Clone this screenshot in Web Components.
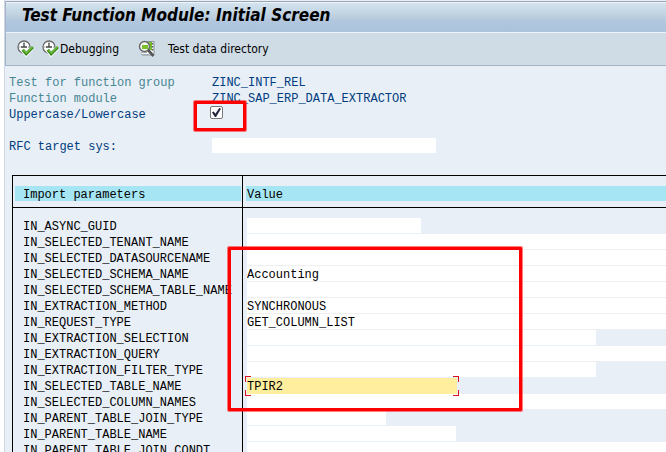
<!DOCTYPE html>
<html lang="en">
<head>
<meta charset="utf-8">
<title>Test Function Module: Initial Screen</title>
<style>
html, body { margin: 0; height: 100%; }
body { background: #fff; overflow: hidden; font: 12px/18px "Liberation Mono", monospace; color: #000; }
</style>
</head>
<body>
<sap-screen>
  <screen-title slot="title">Test Function Module: Initial Screen</screen-title>
  <app-toolbar slot="toolbar"></app-toolbar>
  <function-form></function-form>
  <param-table></param-table>
</sap-screen>

<script>
const define = (name, html, setup) => customElements.define(name, class extends HTMLElement {
  constructor() {
    super();
    const t = document.createElement('template');
    t.innerHTML = html;
    this.attachShadow({ mode: 'open' }).append(t.content.cloneNode(true));
    if (setup) setup(this.shadowRoot);
  }
});

define('mark-box', `<style>
  :host { position: absolute; box-sizing: border-box; border: 3px solid #f00; border-radius: 1px;
    box-shadow: 0 0 0 1px #ff000080; pointer-events: none; z-index: 2; }
</style>`);

define('sap-screen', `<style>
  :host { display: flex; flex-direction: column; box-sizing: border-box; height: 100vh; overflow: hidden;
    margin-left: 4px; border-left: 1px solid #cfd6e6; background: #e8eff6; }
  header { border-top: 1px solid #9aa5b4; border-bottom: 1px solid #a3b4c6; border-left: 1px solid #a3b4c6;
    background: #cfdce6; margin-top: 1px; }
  main { flex: 1; min-height: 0; padding-top: 8px; }
</style>
<header><slot name="title"></slot><slot name="toolbar"></slot></header>
<main><slot></slot></main>`);

define('screen-title', `<style>
  :host { display: block; border-top: 1px solid #eef4f9; border-bottom: 1px solid #eef4f9;
    background: linear-gradient(#d3e4ef, #bccddd 50%, #b1c7de 60%, #acc3dd); }
  h1 { margin: 0; padding: 0 0 5px 16px; font: italic bold 17px/24px "DejaVu Sans Condensed", "DejaVu Sans", sans-serif; white-space: nowrap; }
</style><h1><slot></slot></h1>`);

const clock = `<svg width="18" height="18" viewBox="0 0 18 18" aria-hidden="true" fill="none">
  <circle cx="7" cy="7" r="6" fill="#fff" stroke="#6b6b6b" stroke-width="1.3"/>
  <path d="M7 2v1.500M2 7h1.500M7 10.500V12M11 7h1.500" stroke="#999"/>
  <path d="M7 3v4.500M4 7h6" stroke="#444" stroke-width="1.300"/>
  <path d="M5.200 10l4 4.400L16.200 7" stroke="#fff" stroke-width="4"/>
  <path d="M5.700 9.700l3.500 4.100L16 7" stroke="#39871c" stroke-width="3"/>
  <path d="M6.200 9.800l3.100 3.200L15.400 7" stroke="#71bd3e" stroke-width="1.300"/></svg>`;

define('app-toolbar', `<style>
  :host { display: flex; align-items: center; height: 32px; padding-left: 11px; }
  button { display: flex; align-items: center; border: 0; padding: 0; margin: 0; background: none; color: #000;
    font: 12px/16px "DejaVu Sans Condensed", "DejaVu Sans", sans-serif; white-space: nowrap; }
  .debug { margin-left: 7px; }
  .find { margin-left: 19px; gap: 12px; }
  svg { flex: none; }
</style>
<button type="button" aria-label="Execute">${clock}</button>
<button type="button" class="debug">${clock}<span>Debugging</span></button>
<button type="button" class="find"><svg width="18" height="18" viewBox="0 0 18 18" aria-hidden="true" fill="none">
  <path d="M5 1.500h11v13.500H4" fill="#f3f6f8" stroke="#8b9298"/>
  <path d="M9 2h5v8H9z" fill="#79c02b"/>
  <path d="M14.500 3v1.500M14.500 6v1.500M14.500 9v1.500" stroke="#555" stroke-width="1.500"/>
  <path d="M3 12.500h6M3 14.500h8" stroke="#a7afb5"/>
  <circle cx="6.500" cy="6.500" r="5" fill="#f7faf4" stroke="#686868" stroke-width="1.400"/>
  <path d="M4 5h6v4H4z" fill="#79c02b"/>
  <path d="M10 10l5.500 6" stroke="#555" stroke-width="2.600"/>
</svg><span>Test data directory</span></button>`);

define('function-form', `<style>
  :host { display: block; padding-left: 4px; color: #003c80; }
  .grid { display: grid; grid-template-columns: 203px 1fr; grid-auto-rows: 16px; white-space: nowrap; }
  .dim { color: #468693; }
  .tick { position: relative; }
  .tick input { appearance: none; box-sizing: border-box; display: grid; place-items: center; width: 13px; height: 13px; margin: 0 0 0 -2px;
    border: 1px solid #777; border-radius: 2px; background: #fff; }
  .tick input:checked::before { content: ""; width: 9px; height: 9px; background: #252540;
    clip-path: polygon(0 50%, 20% 40%, 38% 65%, 80% 0, 100% 8%, 45% 100%, 32% 100%); }
  .text { box-sizing: border-box; width: 224px; height: 15px; border: 0; padding: 0; background: #fff; font: inherit; outline: 0; }
  mark-box { left: -18px; top: -5px; width: 52px; height: 30px; }
</style>
<div class="grid">
  <span class="dim">Test for function group</span><span>ZINC_INTF_REL</span>
  <span class="dim">Function module</span><span>ZINC_SAP_ERP_DATA_EXTRACTOR</span>
  <label for="case">Uppercase/Lowercase</label>
  <div class="tick"><input id="case" type="checkbox" checked><mark-box></mark-box></div>
  <span></span><span></span>
  <label for="rfc">RFC target sys:</label><input id="rfc" class="text" type="text">
</div>`);

/* name, value, field width in pixels (omitted: fills the column) */
const params = [
  ['IN_ASYNC_GUID', '', 174],
  ['IN_SELECTED_TENANT_NAME', ''],
  ['IN_SELECTED_DATASOURCENAME', ''],
  ['IN_SELECTED_SCHEMA_NAME', 'Accounting'],
  ['IN_SELECTED_SCHEMA_TABLE_NAME', ''],
  ['IN_EXTRACTION_METHOD', 'SYNCHRONOUS'],
  ['IN_REQUEST_TYPE', 'GET_COLUMN_LIST'],
  ['IN_EXTRACTION_SELECTION', '', 349],
  ['IN_EXTRACTION_QUERY', ''],
  ['IN_EXTRACTION_FILTER_TYPE', '', 349],
  ['IN_SELECTED_TABLE_NAME', 'TPIR2', 210, 'focus'],
  ['IN_SELECTED_COLUMN_NAMES', ''],
  ['IN_PARENT_TABLE_JOIN_TYPE', '', 139],
  ['IN_PARENT_TABLE_NAME', '', 209],
  ['IN_PARENT_TABLE_JOIN_CONDT', '']
];

define('param-table', `<style>
  :host { display: block; position: relative; margin: 21px 0 0 7px; }
  table { width: 100%; table-layout: fixed; border-spacing: 0; border-top: 1px solid #000; border-left: 1px solid #000; }
  col.name { width: 230px; }
  th, td { padding: 0; text-align: left; font-weight: normal; white-space: nowrap; vertical-align: top; }
  th:first-child { border-right: 1px solid #000; }
  thead th { height: 31px; padding: 0; border-bottom: 1px solid #000; }
  thead span { display: block; height: 15px; margin: 10px 0 0 3px; padding-left: 1px; background: #a6e5f3; }
  thead th:first-child span { margin: 10px 1px 0 2px; padding-left: 8px; }
  tbody th { padding-left: 10px; }
  tbody label { display: block; height: 16px; }
  tbody tr:first-child > * { padding-top: 10px; }
  td { padding-left: 4px; }
  .cell { display: block; position: relative; height: 16px; }
  .cell.full { background: #eceef0; }
  input { display: block; box-sizing: border-box; width: 100%; height: 15px; margin: 0; padding: 2px 0 0; border: 0; outline: 0;
    background: #fff; color: #000; font: inherit; line-height: 13px; }
  .focus input { background: #ffee9d; height: 16px; line-height: 14px; }
  .focus i { position: absolute; inset: -2px -2px; --r: #d8101c;
    background:
      linear-gradient(var(--r), var(--r)) 0 0 / 6px 1px, linear-gradient(var(--r), var(--r)) 0 0 / 1px 6px,
      linear-gradient(var(--r), var(--r)) 100% 0 / 6px 1px, linear-gradient(var(--r), var(--r)) 100% 0 / 1px 6px,
      linear-gradient(var(--r), var(--r)) 0 100% / 6px 1px, linear-gradient(var(--r), var(--r)) 0 100% / 1px 6px,
      linear-gradient(var(--r), var(--r)) 100% 100% / 6px 1px, linear-gradient(var(--r), var(--r)) 100% 100% / 1px 6px;
    background-repeat: no-repeat; pointer-events: none; z-index: 1; }
  mark-box { left: 216px; top: 72px; width: 294px; height: 164px; }
</style>
<table>
  <colgroup><col class="name"><col></colgroup>
  <thead><tr><th scope="col"><span>Import parameters</span></th><th scope="col"><span>Value</span></th></tr></thead>
  <tbody></tbody>
</table>
<mark-box></mark-box>`, root => {
  root.querySelector('tbody').innerHTML = params.map(([name, value, width, state], i) =>
    `<tr><th scope="row"><label for="p${i}">${name}</label></th><td><span class="cell ${state || (width ? '' : 'full')}"${width ? ` style="width:${width}px"` : ''}><input id="p${i}" type="text" value="${value}">${state ? '<i></i>' : ''}</span></td></tr>`).join('');
});
</script>
</body>
</html>
